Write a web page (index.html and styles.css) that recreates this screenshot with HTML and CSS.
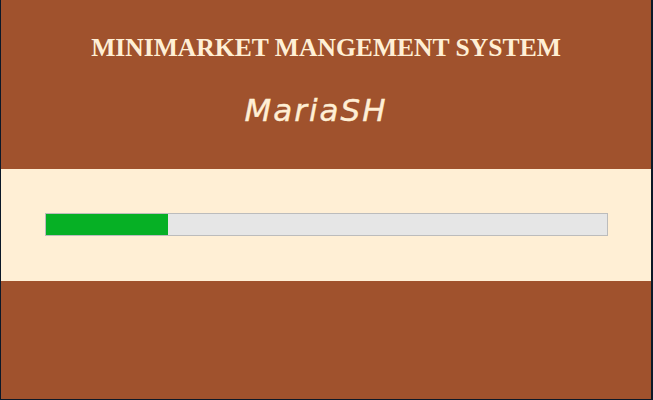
FILE: index.html
```html
<!DOCTYPE html>
<html>
<head>
<meta charset="utf-8">
<link rel="stylesheet" href="styles.css">
</head>
<body>
<div class="frame">
  <header class="top">
    <h1 class="title">MINIMARKET MANGEMENT SYSTEM</h1>
    <div class="name">MariaSH</div>
  </header>
  <section class="band">
    <div class="progress"><div class="fill" style="width:122px"></div></div>
  </section>
  <footer class="bottom"></footer>
</div>
</body>
</html>
```
FILE: styles.css
```css
html, body { margin: 0; padding: 0; }
body { width: 653px; height: 400px; overflow: hidden; background: #0b1828; }
.frame {
  box-sizing: border-box;
  width: 653px; height: 400px;
  border-left: 1px solid #0b1828;
  border-right: 2px solid #0b1828;
  border-bottom: 1px solid #0b1828;
  display: flex; flex-direction: column;
  background: #a0522d;
}
.top {
  height: 169px;
  background: #a0522d;
  display: flex; flex-direction: column; align-items: center;
}
.title {
  margin: 34px 0 0 0;
  font-family: "Liberation Serif", serif;
  font-weight: bold;
  font-size: 25.6px;
  line-height: 28px;
  color: #ffefd5;
}
.name {
  margin-top: 30px;
  padding-right: 20px;
  font-family: "DejaVu Sans", sans-serif;
  font-style: oblique;
  font-size: 31px;
  line-height: 36px;
  letter-spacing: 2px;
  -webkit-text-stroke: 0.4px #ffefd5;
  color: #ffefd5;
}
.band {
  height: 112px;
  background: #ffefd5;
  box-sizing: border-box;
  padding: 44px 0 0 44px;
}
.progress {
  box-sizing: border-box;
  width: 563px; height: 23px;
  border: 1px solid #bcbcbc;
  background: #e6e6e6;
}
.fill { height: 100%; background: #06b025; }
.bottom { flex: 1; background: #a0522d; }
```
